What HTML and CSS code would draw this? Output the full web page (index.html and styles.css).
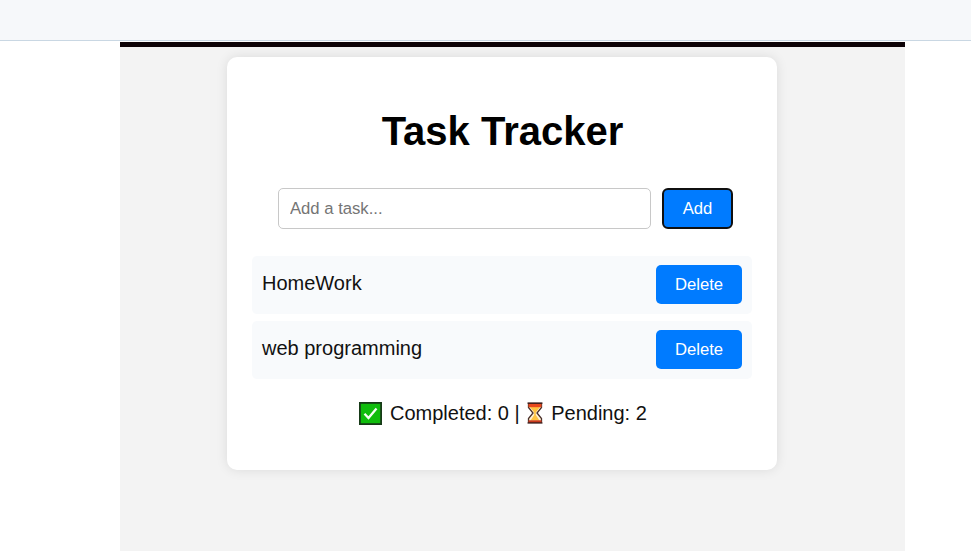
FILE: index.html
```html
<!DOCTYPE html>
<html lang="en">
<head>
<meta charset="utf-8">
<title>Task Tracker</title>
<link rel="stylesheet" href="styles.css">
</head>
<body>
<header class="topbar"></header>
<main class="stage">
  <section class="card">
    <h1 class="title">Task Tracker</h1>
    <form class="entry">
      <input class="entry-input" type="text" placeholder="Add a task...">
      <button class="btn btn-add" type="button">Add</button>
    </form>
    <ul class="tasks">
      <li class="task"><span class="task-name">HomeWork</span><button class="btn" type="button">Delete</button></li>
      <li class="task"><span class="task-name">web programming</span><button class="btn" type="button">Delete</button></li>
    </ul>
    <p class="summary">
      <svg class="check" viewBox="0 0 23 23"><rect x=".9" y=".9" width="21.200" height="21.200" fill="#0fbd0c" stroke="#173a18" stroke-width="1.800"/><path d="M5.500 11.700l4 4.300L17.500 6.500" fill="none" stroke="#f4fff3" stroke-width="2.300"/></svg>
      <span class="done">Completed: 0 |</span>
      <svg class="glass" viewBox="0 0 16 22"><path d="M1.500 1.500h13V5.500L10 11l4.500 5.500v4h-13v-4L6 11 1.500 5.500z" fill="#fff0cf" stroke="#4b302b" stroke-width="1.300"/><path d="M3 5h10L8.800 10.500v2.500l3.700 5.500h-9l3.700-5.500v-2.500z" fill="#ffc342"/><path d="M1.500 1.800h13v3.400h-13z" fill="#e8481d"/><path d="M1.500 18.300h13v2.200h-13z" fill="#c9381d"/><path d="M.5 1.200h15M.5 21h15" stroke="#35191a" stroke-width="1.200"/></svg>
      <span>Pending: 2</span>
    </p>
  </section>
</main>
</body>
</html>
```
FILE: styles.css
```css
* { box-sizing: border-box; }
body {
  margin: 0;
  height: 551px;
  overflow: hidden;
  background: #fff;
  color: #111;
  font: 20px/23px "Liberation Sans", Arial, sans-serif;
}
.topbar {
  height: 41px;
  margin-bottom: 1px;
  background: #f6f8fa;
  border-bottom: 1px solid #c9d7e3;
}
.stage {
  width: 785px;
  height: 509px;
  margin-left: 120px;
  padding: 10px 0 0 107px;
  background: #f3f3f3;
  border-top: 5px solid #0d0307;
}
.card {
  width: 550px;
  height: 413px;
  padding: 51px 25px 0;
  border-radius: 10px;
  background: #fff;
  box-shadow: 0 0 12px rgba(0, 0, 0, .1);
}
.title {
  margin: 0 0 0 1px;
  color: #000;
  font-size: 40px;
  line-height: 46px;
  text-align: center;
}
.entry {
  display: flex;
  gap: 11px;
  margin: 34px 19px 0 26px;
}
.entry-input {
  width: 373px;
  height: 41px;
  padding: 0 11px;
  border: 1px solid #c8c8c8;
  border-radius: 5px;
  font: 16.67px "Liberation Sans", Arial, sans-serif;
}
.entry-input::placeholder { color: #757575; }
.btn {
  width: 86px;
  height: 39px;
  padding: 0;
  border: 0;
  border-radius: 5px;
  background: #007bff;
  color: #fff;
  font: 16.67px "Liberation Sans", Arial, sans-serif;
}
.btn-add {
  width: 71px;
  height: 41px;
  border: 2px solid #101010;
  border-radius: 6px;
}
.tasks {
  display: grid;
  gap: 7px;
  margin: 27px 0 0;
  padding: 0;
  list-style: none;
}
.task {
  display: flex;
  justify-content: space-between;
  height: 58px;
  padding: 9.400px 10px 0;
  border-radius: 5px;
  background: #f8fafc;
}
.task-name { margin-top: 7px; }
.summary {
  display: flex;
  align-items: center;
  margin: 22.500px 0 0 107px;
}
.check {
  width: 23px;
  height: 23px;
  margin-right: 8px;
}
.glass {
  width: 16px;
  height: 22px;
  margin: 0 8px 0 7.500px;
}
```
